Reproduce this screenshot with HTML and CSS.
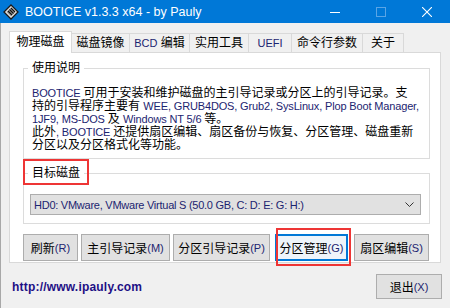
FILE: index.html
```html
<!DOCTYPE html>
<html lang="zh">
<head>
<meta charset="utf-8">
<title>BOOTICE</title>
<link rel="stylesheet" href="styles.css">
</head>
<body>
<div class="win">
  <div class="titlebar">
    <svg class="appicon" width="16" height="16" viewBox="0 0 16 16">
      <polygon points="8,1 15,8 8,15 1,8" fill="#e8e8e8" stroke="#1a1a1a" stroke-width="1.3"/>
      <polygon points="8,3.5 12.5,8 8,12.5 3.5,8" fill="#9a9a9a"/>
      <path d="M5 7 L9 11 M6.5 5.5 L10.5 9.5 M8 4 L12 8" stroke="#111" stroke-width="1.1"/>
    </svg>
    <span class="title">BOOTICE v1.3.3 x64 - by Pauly</span>
    <div class="controls">
      <div class="ctl"><svg width="10" height="10" viewBox="0 0 10 10"><path d="M0 5.5 H10" stroke="#fff" stroke-width="1"/></svg></div>
      <div class="ctl"><svg width="10" height="10" viewBox="0 0 10 10"><rect x="0.5" y="0.5" width="9" height="9" fill="none" stroke="#5aa5e6" stroke-width="1"/></svg></div>
      <div class="ctl"><svg width="10" height="10" viewBox="0 0 10 10"><path d="M0 0 L10 10 M10 0 L0 10" stroke="#fff" stroke-width="1.1"/></svg></div>
    </div>
  </div>
  <div class="body">
    <div class="tabs">
      <div class="tab sel t1">物理磁盘</div>
      <div class="tab t2">磁盘镜像</div>
      <div class="tab t3"><span class="lat">BCD</span>&nbsp;编辑</div>
      <div class="tab t4">实用工具</div>
      <div class="tab t5"><span class="lat">UEFI</span></div>
      <div class="tab t6">命令行参数</div>
      <div class="tab t7">关于</div>
    </div>
    <div class="panel">
      <div class="group g1">
        <span class="glabel">使用说明</span>
        <div class="desc">
          <div class="ln"><span class="lat">BOOTICE </span>可用于安装和维护磁盘的主引导记录或分区上的引导记录。支</div>
          <div class="ln">持的引导程序主要有 <span class="lat">WEE, GRUB4DOS, Grub2, SysLinux, Plop Boot Manager,</span></div>
          <div class="ln"><span class="lat">1JF9, MS-DOS </span>及 <span class="lat">Windows NT 5/6 </span>等。</div>
          <div class="ln">此外<span class="lat">, BOOTICE </span>还提供扇区编辑、扇区备份与恢复、分区管理、磁盘重新</div>
          <div class="ln">分区以及分区格式化等功能。</div>
        </div>
      </div>
      <div class="group g2">
        <span class="glabel">目标磁盘</span>
        <div class="mark mark-label"></div>
        <div class="combo">
          <span class="lat">HD0: VMware, VMware Virtual S (50.0 GB, C: D: E: G: H:)</span>
          <svg class="chev" width="9" height="6" viewBox="0 0 9 6"><path d="M0.5 0.5 L4.5 4.5 L8.5 0.5" fill="none" stroke="#333" stroke-width="1"/></svg>
        </div>
      </div>
      <div class="btnrow">
        <div class="btn b1">刷新<span class="lat">(R)</span></div>
        <div class="btn b2">主引导记录<span class="lat">(M)</span></div>
        <div class="btn b3">分区引导记录<span class="lat">(P)</span></div>
        <div class="btn b4 focus">分区管理<span class="lat">(G)</span><div class="mark mark-btn"></div></div>
        <div class="btn b5">扇区编辑<span class="lat">(S)</span></div>
      </div>
    </div>
    <div class="footer">
      <span class="link">http://www.ipauly.com</span>
      <div class="btn exit">退出<span class="lat">(X)</span></div>
    </div>
  </div>
</div>
</body>
</html>
```

FILE: styles.css
```css
html, body {
  margin: 0;
  padding: 0;
}
body {
  width: 450px;
  height: 308px;
  overflow: hidden;
  background: #f0f0f0;
  font-family: "Liberation Sans", "Noto Sans CJK SC", sans-serif;
  font-size: 12px;
  color: #000;
}
.win {
  width: 450px;
  height: 308px;
  display: flex;
  flex-direction: column;
}
.titlebar {
  height: 23px;
  flex: none;
  background: #0078d7;
  display: flex;
  align-items: center;
}
.appicon {
  margin-left: 3px;
  flex: none;
}
.title {
  margin-left: 6px;
  color: #fff;
  font-family: "Liberation Sans", sans-serif;
  font-size: 12.5px;
  white-space: nowrap;
}
.controls {
  margin-left: auto;
  display: flex;
  height: 23px;
}
.ctl {
  width: 46px;
  height: 23px;
  display: flex;
  align-items: center;
  justify-content: center;
}
.body {
  flex: 1;
  border-left: 1px solid #a8a8a8;
  padding: 8px 8px 0 8px;
}
.lat {
  color: #1c2470;
  font-size: 11px;
}
.tabs {
  display: flex;
  align-items: flex-end;
  height: 22px;
  margin-bottom: -1px;
  position: relative;
  z-index: 1;
}
.tab {
  box-sizing: border-box;
  height: 19px;
  margin-bottom: 1px;
  margin-left: -1px;
  border: 1px solid #d9d9d9;
  border-bottom: none;
  background: #f0f0f0;
  display: flex;
  align-items: center;
  justify-content: center;
  white-space: nowrap;
  line-height: 14px;
}
.tab.sel {
  height: 22px;
  margin-bottom: 0;
  margin-left: 0;
  background: #fff;
  padding-bottom: 2px;
}
.t1 { width: 63px; }
.t2 { width: 59px; }
.t3 { width: 61px; }
.t4 { width: 60px; }
.t5 { width: 44px; }
.t6 { width: 72px; }
.t7 { width: 42px; }
.panel {
  box-sizing: border-box;
  width: 432px;
  height: 211px;
  border: 1px solid #d9d9d9;
  background: #fff;
  padding: 15px 10px 0 13px;
}
.group {
  border: 1px solid #dcdcdc;
  position: relative;
}
.glabel {
  display: inline-block;
  margin-top: -8px;
  margin-left: 4px;
  padding: 0 4px;
  background: #fff;
  line-height: 14px;
  height: 14px;
  vertical-align: top;
}
.g1 {
  padding-bottom: 6px;
}
.desc {
  margin-top: 4px;
  padding-left: 8px;
}
.ln {
  line-height: 13px;
  height: 13px;
  white-space: nowrap;
}
.desc .lat {
  letter-spacing: -0.15px;
}
.g2 {
  margin-top: 14px;
  padding-bottom: 8px;
}
.combo {
  box-sizing: border-box;
  margin: 6px 8px 0 6px;
  height: 21px;
  border: 1px solid #adadad;
  background: #e1e1e1;
  display: flex;
  align-items: center;
  padding-left: 3px;
  white-space: nowrap;
}
.combo .lat {
  letter-spacing: -0.25px;
}
.chev {
  margin-left: auto;
  margin-right: 6px;
}
.mark {
  position: absolute;
  box-sizing: border-box;
  border: 2px solid #ee3535;
  pointer-events: none;
}
.mark-label {
  left: -1px;
  top: -15px;
  width: 66px;
  height: 26px;
}
.btnrow {
  display: flex;
  margin-top: 10px;
  gap: 3px;
}
.btn {
  box-sizing: border-box;
  height: 27px;
  border: 1px solid #adadad;
  background: #e1e1e1;
  display: flex;
  align-items: center;
  justify-content: center;
  white-space: nowrap;
  position: relative;
}
.b1 { width: 55px; }
.b2 { width: 89px; }
.b3 { width: 97px; }
.b4 { width: 73px; margin-left: 2px; }
.b5 { width: 75px; margin-left: 3px; }
.btn.focus {
  border: 2px solid #0078d7;
  background: #eef4fa;
}
.mark-btn {
  left: -1px;
  top: -8px;
  width: 75px;
  height: 38px;
}
.footer {
  display: flex;
  align-items: center;
  justify-content: space-between;
  margin-top: 11px;
  padding-left: 3px;
}
.link {
  font-family: "Liberation Sans", sans-serif;
  font-weight: bold;
  font-size: 12px;
  letter-spacing: 0.2px;
  color: #1d0f85;
}
.btn.exit {
  width: 66px;
  height: 25px;
}
```
